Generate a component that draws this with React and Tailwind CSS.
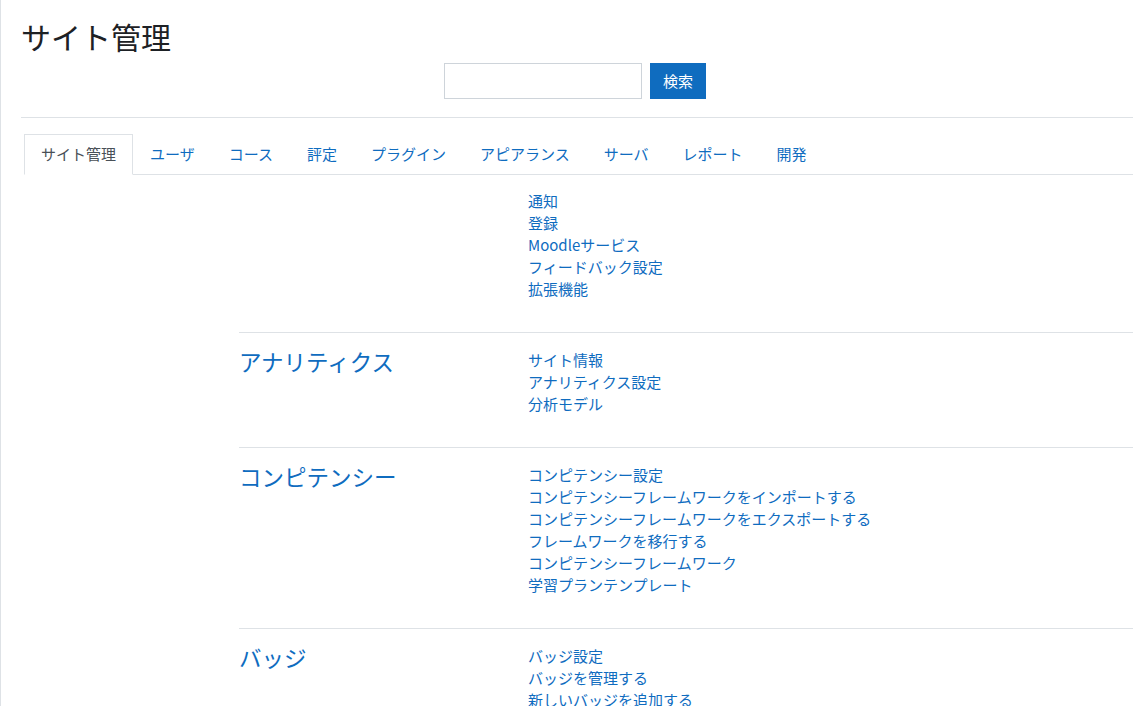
const tabs = ['サイト管理', 'ユーザ', 'コース', '評定', 'プラグイン', 'アピアランス', 'サーバ', 'レポート', '開発']

const sections = [
  { title: '', links: ['通知', '登録', 'Moodleサービス', 'フィードバック設定', '拡張機能'] },
  { title: 'アナリティクス', links: ['サイト情報', 'アナリティクス設定', '分析モデル'] },
  {
    title: 'コンピテンシー',
    links: [
      'コンピテンシー設定',
      'コンピテンシーフレームワークをインポートする',
      'コンピテンシーフレームワークをエクスポートする',
      'フレームワークを移行する',
      'コンピテンシーフレームワーク',
      '学習プランテンプレート',
    ],
  },
  { title: 'バッジ', links: ['バッジ設定', 'バッジを管理する', '新しいバッジを追加する', 'バッジの管理'] },
]

export default function App() {
  return (
    <div
      className="min-h-screen overflow-hidden bg-white border-l border-[#dee2e6] text-[15px] leading-[1.5] text-[#1d2125]"
      style={{ fontFamily: '"Noto Sans CJK JP", "Noto Sans", sans-serif' }}
    >
      <div className="pl-[20px]">
        {/* page header */}
        <h1 className="pt-[18px] text-[30px] leading-[36px] font-normal text-[#1d2125]">サイト管理</h1>
        <div className="mt-[9px] flex justify-center gap-[8px] pr-[4px]">
          <input type="text" className="w-[198px] h-[36px] border border-[#ced4da] bg-white outline-none" />
          <button className="h-[36px] w-[56px] bg-[#0f6cbf] text-white text-[15px]">検索</button>
        </div>
        <div className="mt-[18px] border-t border-[#dee2e6]" />

        {/* tabs */}
        <div className="mt-[16px] ml-[3px] flex border-b border-[#dee2e6]">
          {tabs.map((t, i) => (
            <div
              key={t}
              className={
                i === 0
                  ? '-mb-px border border-[#dee2e6] border-b-white bg-white px-4 py-[8px] leading-[22px] text-[#495057]'
                  : 'border border-transparent px-4 py-[8px] leading-[22px] text-[#0f6cbf]'
              }
            >
              {t}
            </div>
          ))}
        </div>

        {/* categories */}
        <div className="ml-[218px]">
          {sections.map((s, i) => (
            <div
              key={i}
              className={i > 0 ? 'flex border-t border-[#dee2e6] pt-[16px] pb-[32px]' : 'flex pt-[15px] pb-[32px]'}
            >
              <div className="w-[289px] shrink-0">
                {s.title && (
                  <h4 className="-mt-px text-[22.5px] leading-[27px] text-[#0f6cbf] font-normal">{s.title}</h4>
                )}
              </div>
              <ul className="flex flex-col">
                {s.links.map((l) => (
                  <li key={l} className="text-[#0f6cbf] leading-[22px]">
                    {l}
                  </li>
                ))}
              </ul>
            </div>
          ))}
        </div>
      </div>
    </div>
  )
}
